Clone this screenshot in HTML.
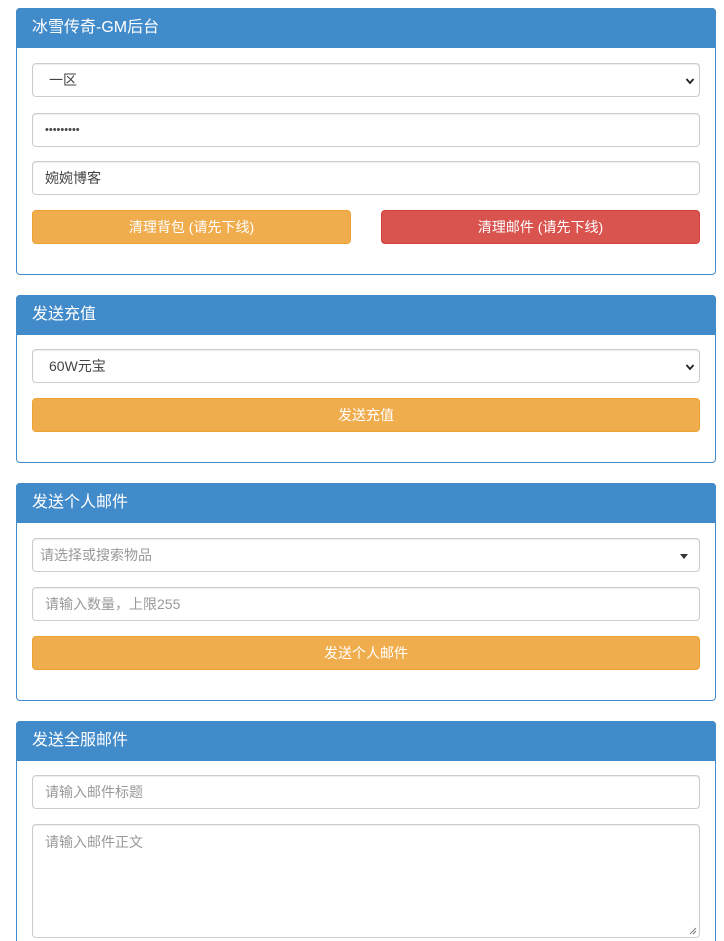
<!DOCTYPE html>
<html style="height:941px;overflow:hidden"><head><meta charset="utf-8"><style>
*{box-sizing:border-box;margin:0;padding:0}
body{width:724px;height:941px;overflow:hidden;background:#fff;font-family:"Liberation Sans","Noto Sans CJK SC",sans-serif;font-size:14px;color:#555;position:relative}
.p{position:absolute;left:16px;width:700px;border:1px solid #428bca;border-radius:4px}
.h{position:absolute;left:-1px;top:-1px;width:700px;height:40px;background:#428bca;color:#fff;font-size:16px;line-height:40px;padding-left:16px;border-radius:4px 4px 0 0}
.i{position:absolute;left:32px;width:668px;height:34px;border:1px solid #ccc;border-radius:4px;background:#fff;line-height:32px;padding-left:12px;box-shadow:inset 0 1px 1px rgba(0,0,0,.075)}
.ph{color:#999}
.b{position:absolute;height:34px;border-radius:4px;color:#fff;text-align:center;line-height:32px;background:#f0ad4e;border:1px solid #eea236}
.r{background:#d9534f;border-color:#d43f3a}
.ar{position:absolute;right:4px;top:12px;width:10px;height:10px}
.car{position:absolute;right:11px;top:15px;border-left:4px solid transparent;border-right:4px solid transparent;border-top:5px solid #333}
</style></head><body>
<div class="p" style="top:8px;height:267px"><div class="h">冰雪传奇-GM后台</div></div>
<div class="i" style="top:63px;padding-left:16px;color:#444">一区<svg class="ar" viewBox="0 0 10 10"><path d="M1.5 3l3.5 4 3.5-4" fill="none" stroke="#222" stroke-width="1.8"/></svg></div>
<div class="i" style="top:113px;color:#444;font-size:11px">•••••••••</div>
<div class="i" style="top:161px;color:#444">婉婉博客</div>
<div class="b" style="top:210px;left:32px;width:319px">清理背包 (请先下线)</div>
<div class="b r" style="top:210px;left:381px;width:319px">清理邮件 (请先下线)</div>

<div class="p" style="top:295px;height:168px"><div class="h">发送充值</div></div>
<div class="i" style="top:349px;padding-left:16px;color:#444">60W元宝<svg class="ar" viewBox="0 0 10 10"><path d="M1.5 3l3.5 4 3.5-4" fill="none" stroke="#222" stroke-width="1.8"/></svg></div>
<div class="b" style="top:398px;left:32px;width:668px">发送充值</div>

<div class="p" style="top:483px;height:218px"><div class="h">发送个人邮件</div></div>
<div class="i ph" style="top:538px;padding-left:7px">请选择或搜索物品<span class="car"></span></div>
<div class="i ph" style="top:587px">请输入数量，上限255</div>
<div class="b" style="top:636px;left:32px;width:668px">发送个人邮件</div>

<div class="p" style="top:721px;height:230px"><div class="h">发送全服邮件</div></div>
<div class="i ph" style="top:775px">请输入邮件标题</div>
<div class="i ph" style="top:824px;height:114px;line-height:34px">请输入邮件正文<svg style="position:absolute;right:2px;bottom:2px" width="8" height="8" viewBox="0 0 8 8"><path d="M1 7L7 1M4 7L7 4" stroke="#777" stroke-width="1"/></svg></div>
</body></html>
